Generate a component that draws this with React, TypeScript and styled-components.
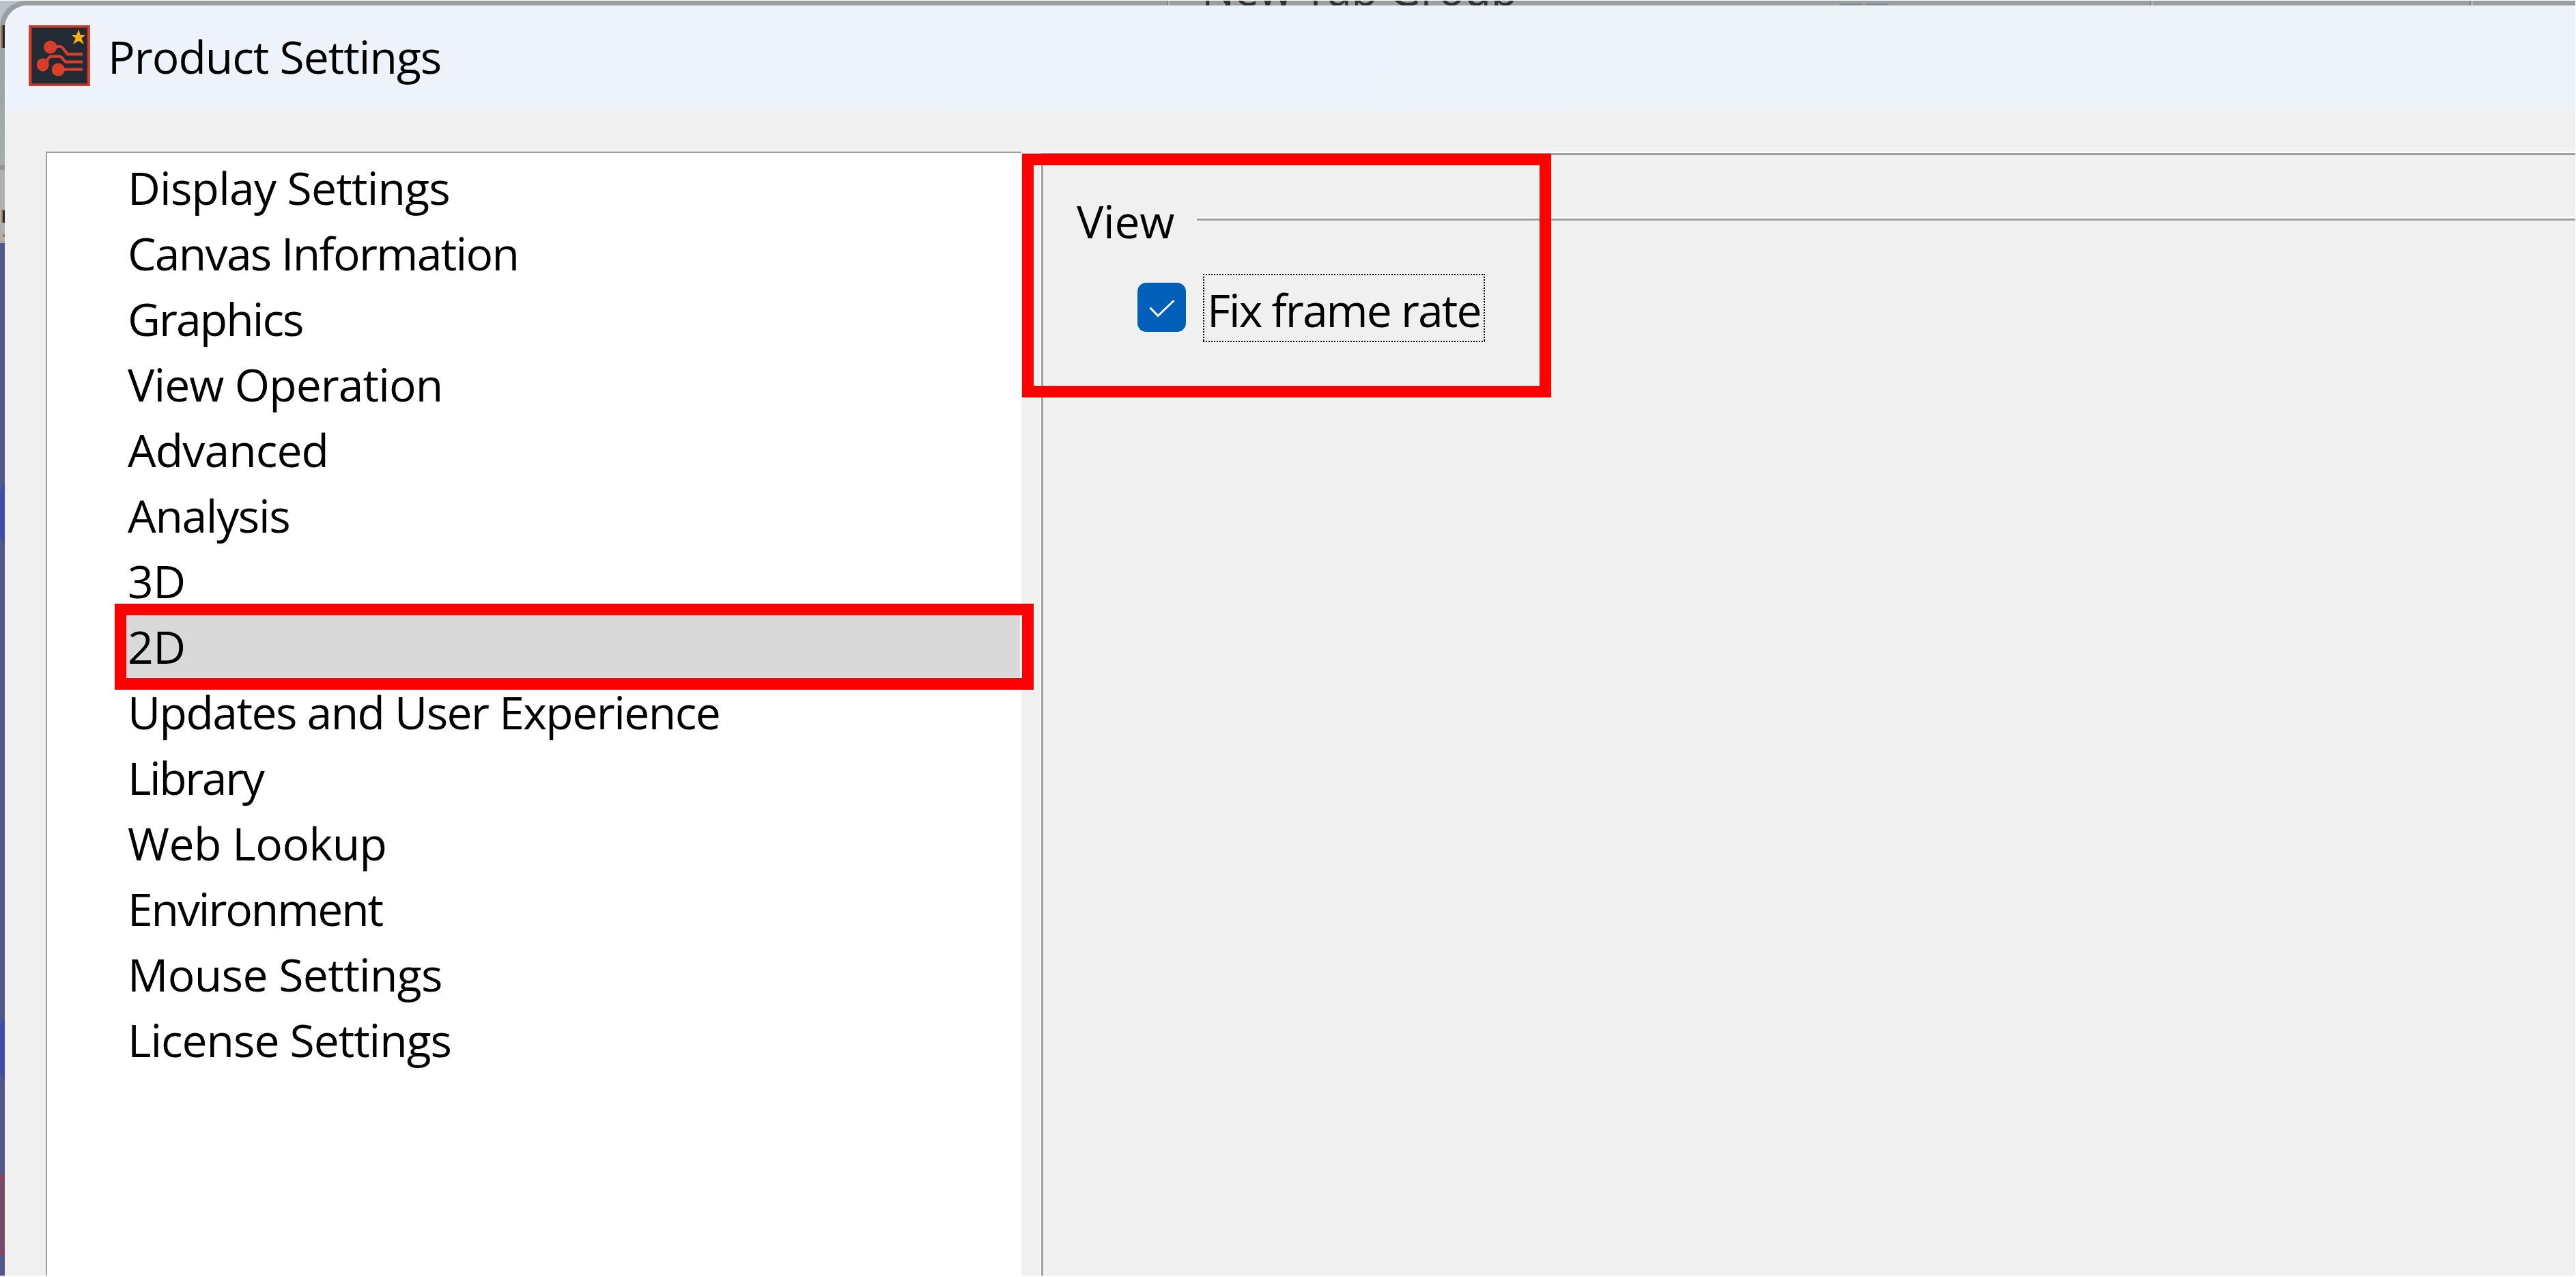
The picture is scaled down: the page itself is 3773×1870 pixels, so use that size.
import React, { useState } from "react";
import styled, { createGlobalStyle } from "styled-components";

const GlobalStyle = createGlobalStyle`
  * {
    box-sizing: border-box;
  }

  body {
    margin: 0;
    background: #fff;
    color: #000;
    font-family: "Open Sans", "Noto Sans", sans-serif;
    font-size: 66px;
  }
`;

const Desktop = styled.div`
  width: 3773px;
  height: 1870px;
  padding: 1px 1px 2px 0;
  overflow: hidden;
`;

const Backdrop = styled.div`
  height: 100%;
  background: #b9c3ca;
`;

// Shaded frame round the dialog, the app behind shows through it
const Frame = styled.div`
  display: grid;
  grid-template-columns: 7px 1fr;
  grid-template-rows: 7px 1fr;
  height: 100%;
  background: #9aa09f;
  border-top-left-radius: 38px;
  overflow: hidden;
`;

const TopEdge = styled.div`
  grid-column: 1 / 3;
  display: flex;
  height: 7px;
  overflow: hidden;
`;

const TabTitle = styled.span`
  width: 936px;
  margin-left: 46px;
  color: #2f3132;
  font-size: 64px;
  line-height: 64px;
  letter-spacing: -0.3px;
  white-space: nowrap;
  margin-top: -49px;
`;

const Separator = styled.i<{ $before: number }>`
  flex: none;
  width: 5px;
  height: 7px;
  margin-left: ${(props) => props.$before}px;
  background: #b0b5b4;
  border-left: 2px solid #7f8584;
`;

const Chip = styled.i<{ $before?: number }>`
  flex: none;
  width: 34px;
  height: 3px;
  margin: 4px 0 0 ${(props) => props.$before || 4}px;
  background: #888c99;
`;

const Window = styled.div`
  display: flex;
  flex-direction: column;
  background: #f0f0f0;
  border-top-left-radius: 33px;
  overflow: hidden;
`;

const TitleBar = styled.header`
  display: flex;
  flex: none;
  height: 154px;
  padding: 29px 0 0 35px;
  background: linear-gradient(100deg, #eff3fb 0%, #edf3fb 50%, #edf3f7 62%);
`;

const Title = styled.h1`
  margin: -29px 0 0 26px;
  font-size: 66px;
  font-weight: 400;
  line-height: 149px;
  letter-spacing: -1px;
  white-space: nowrap;
`;

const Body = styled.div`
  display: flex;
  flex: 1;
  gap: 27px;
  min-height: 0;
  padding: 60px 0 0 60px;
`;

const Sidebar = styled.nav`
  position: relative;
  flex: none;
  width: 1429px;
  padding: 0 2px 0 116px;
  background: #fff;
  border: solid #a0a0a0;
  border-width: 2px 0 0 2px;
`;

const Category = styled.div<{ $active: boolean; $tracking: number }>`
  height: 96px;
  padding-left: 2px;
  line-height: 100px;
  letter-spacing: ${(props) => props.$tracking}px;
  white-space: nowrap;
  cursor: pointer;
  background: ${(props) => (props.$active ? "#d9d9d9" : "none")};
`;

const PanelEdge = styled.div`
  flex: 1;
  padding: 2px 0 0 2px;
  background: #fff;
`;

const Panel = styled.main`
  position: relative;
  height: 100%;
  padding: 46px 0 0 49px;
  background: #f0f0f0;
  border: solid #a0a0a0;
  border-width: 3px 0 0 3px;
`;

const GroupHeader = styled.div`
  display: flex;
  height: 100px;
  line-height: 100px;
`;

const GroupName = styled.span`
  width: 176px;
  letter-spacing: -0.3px;
`;

const Rule = styled.div`
  flex: 1;
  height: 5px;
  margin-top: 45px;
  background: #a0a0a0;
  border-top: 2px solid #fff;
`;

const OptionRow = styled.div`
  display: flex;
  gap: 25px;
  margin: 28px 0 0 89px;
  cursor: pointer;
`;

const CheckBox = styled.span<{ $checked: boolean }>`
  width: 71px;
  height: 72px;
  margin-top: 13px;
  border-radius: 13px;
  background: ${(props) => (props.$checked ? "#005fb8" : "#fff")};

  svg {
    display: block;
  }
`;

const OptionLabel = styled.span`
  width: 413px;
  height: 100px;
  padding: 2px 0 0 6px;
  line-height: 100px;
  letter-spacing: -1.95px;
  white-space: nowrap;
  background:
    repeating-linear-gradient(90deg, #000 0 2px, transparent 2px 4px) 0 0 / 100% 2px no-repeat,
    repeating-linear-gradient(90deg, #000 0 2px, transparent 2px 4px) 0 100% / 100% 2px no-repeat,
    repeating-linear-gradient(#000 0 2px, transparent 2px 4px) 0 0 / 2px 100% no-repeat,
    repeating-linear-gradient(#000 0 2px, transparent 2px 4px) 100% 0 / 2px 100% no-repeat;
`;

const Callout = styled.div<{ $x: number; $y: number; $w: number; $h: number }>`
  position: absolute;
  z-index: 1;
  left: ${(props) => props.$x}px;
  top: ${(props) => props.$y}px;
  width: ${(props) => props.$w}px;
  height: ${(props) => props.$h}px;
  border: 17px solid #f00;
  pointer-events: none;
`;

const AppLogo = () => (
  <svg width="90" height="89" viewBox="0 0 90 89">
    <rect width="90" height="89" fill="#d83f2b" />
    <rect x="3" y="2" width="84" height="85" fill="#9c342e" />
    <rect x="5" y="4" width="80" height="81" fill="#222b33" />
    <g fill="#d83f2b">
      <circle cx="31.7" cy="32" r="9.6" />
      <ellipse cx="20.7" cy="57.8" rx="9" ry="9.6" />
      <circle cx="43.3" cy="65" r="9.6" />
    </g>
    <g fill="none" stroke="#d83f2b" strokeWidth="4.2">
      <path d="M34 31H46C49 31 50.5 33.5 52 36L57 42.3H79" />
      <path d="M27 52C29 48 30 45.6 34 45.6H45C48.5 45.6 49 48 50.5 50L54 53.7H79" />
      <path d="M43 64.7H79" />
    </g>
    <path
      fill="#f8ad18"
      d="M73 6L75.7 14H83.5L77.3 19L81 28L73 22.7L65 28L68.7 19L62.5 14H70.3Z"
    />
  </svg>
);

// The slice of the app canvas left of the dialog
const LeftEdge = () => (
  <svg width="7" height="1860" viewBox="0 8 7 1860">
    <defs>
      <linearGradient id="edge" x1="0" y1="0" x2="0" y2="1">
        <stop offset="0" stopColor="#9ca1a2" />
        <stop offset="1" stopColor="#a6acab" />
      </linearGradient>
    </defs>
    <rect y="40" width="7" height="202" fill="url(#edge)" />
    <rect x="2" y="37" width="2" height="33" fill="#8a6535" />
    <rect x="4" y="37" width="3" height="33" fill="#262626" />
    <rect y="242" width="7" height="7" fill="#93949c" />
    <rect y="249" width="7" height="107" fill="#b0b0b0" />
    <rect x="2" y="307" width="3" height="19" fill="#b08050" />
    <rect x="4" y="308" width="3" height="18" fill="#262626" />
    <rect x="4" y="343" width="3" height="4" fill="#ab7c46" />
    <rect y="352" width="7" height="2" fill="#a5a5a5" />
    <rect y="356" width="7" height="1514" fill="#50588a" />
    <path d="M7 703L0 722V782L7 801Z" fill="#414ca6" />
    <path d="M7 1489L0 1502V1568L7 1586Z" fill="#414ca6" />
    <path d="M0 1720L7 1726V1838L0 1832Z" fill="#774a6c" />
    <path d="M0 1720L7 1726M0 1832L7 1838" stroke="#bd2f2f" strokeWidth="2" />
  </svg>
);

const categories = [
  { name: "Display Settings", tracking: -0.8 },
  { name: "Canvas Information", tracking: -1.7 },
  { name: "Graphics", tracking: -1.95 },
  { name: "View Operation", tracking: -0.92 },
  { name: "Advanced", tracking: -0.9 },
  { name: "Analysis", tracking: -1.35 },
  { name: "3D", tracking: -0.5 },
  { name: "2D", tracking: -0.5 },
  { name: "Updates and User Experience", tracking: -1.53 },
  { name: "Library", tracking: -2.4 },
  { name: "Web Lookup", tracking: -0.55 },
  { name: "Environment", tracking: -2.1 },
  { name: "Mouse Settings", tracking: -0.65 },
  { name: "License Settings", tracking: -1.05 },
];

const App = () => {
  const [active, setActive] = useState("2D");
  const [fixed, setFixed] = useState(true);

  return (
    <>
      <GlobalStyle />
      <Desktop>
        <Backdrop>
          <Frame>
            <TopEdge>
              <Separator $before={1709} />
              <TabTitle>New Tab Group</TabTitle>
              <Chip $before={-2} />
              <Chip />
              <Separator $before={383} />
              <Separator $before={463} />
            </TopEdge>
            <LeftEdge />
            <Window>
              <TitleBar>
                <AppLogo />
                <Title>Product Settings</Title>
              </TitleBar>
              <Body>
                <Sidebar>
                  {categories.map(({ name, tracking }) => (
                    <Category
                      key={name}
                      $active={name === active}
                      $tracking={tracking}
                      onClick={() => setActive(name)}
                    >
                      {name}
                    </Category>
                  ))}
                  <Callout $x={99} $y={660} $w={1346} $h={126} />
                </Sidebar>
                <PanelEdge>
                  <Panel>
                    <GroupHeader>
                      <GroupName>View</GroupName>
                      <Rule />
                    </GroupHeader>
                    <OptionRow onClick={() => setFixed(!fixed)}>
                      <CheckBox $checked={fixed}>
                        <svg width="71" height="72" viewBox="0 0 71 72">
                          <path d="M18.5 36.5L30 48.5L53.5 26" fill="none" stroke="#fff" strokeWidth="3" />
                        </svg>
                      </CheckBox>
                      <OptionLabel>Fix frame rate</OptionLabel>
                    </OptionRow>
                    <Callout $x={-31} $y={-2} $w={775} $h={357} />
                  </Panel>
                </PanelEdge>
              </Body>
            </Window>
          </Frame>
        </Backdrop>
      </Desktop>
    </>
  );
};

export default App;
